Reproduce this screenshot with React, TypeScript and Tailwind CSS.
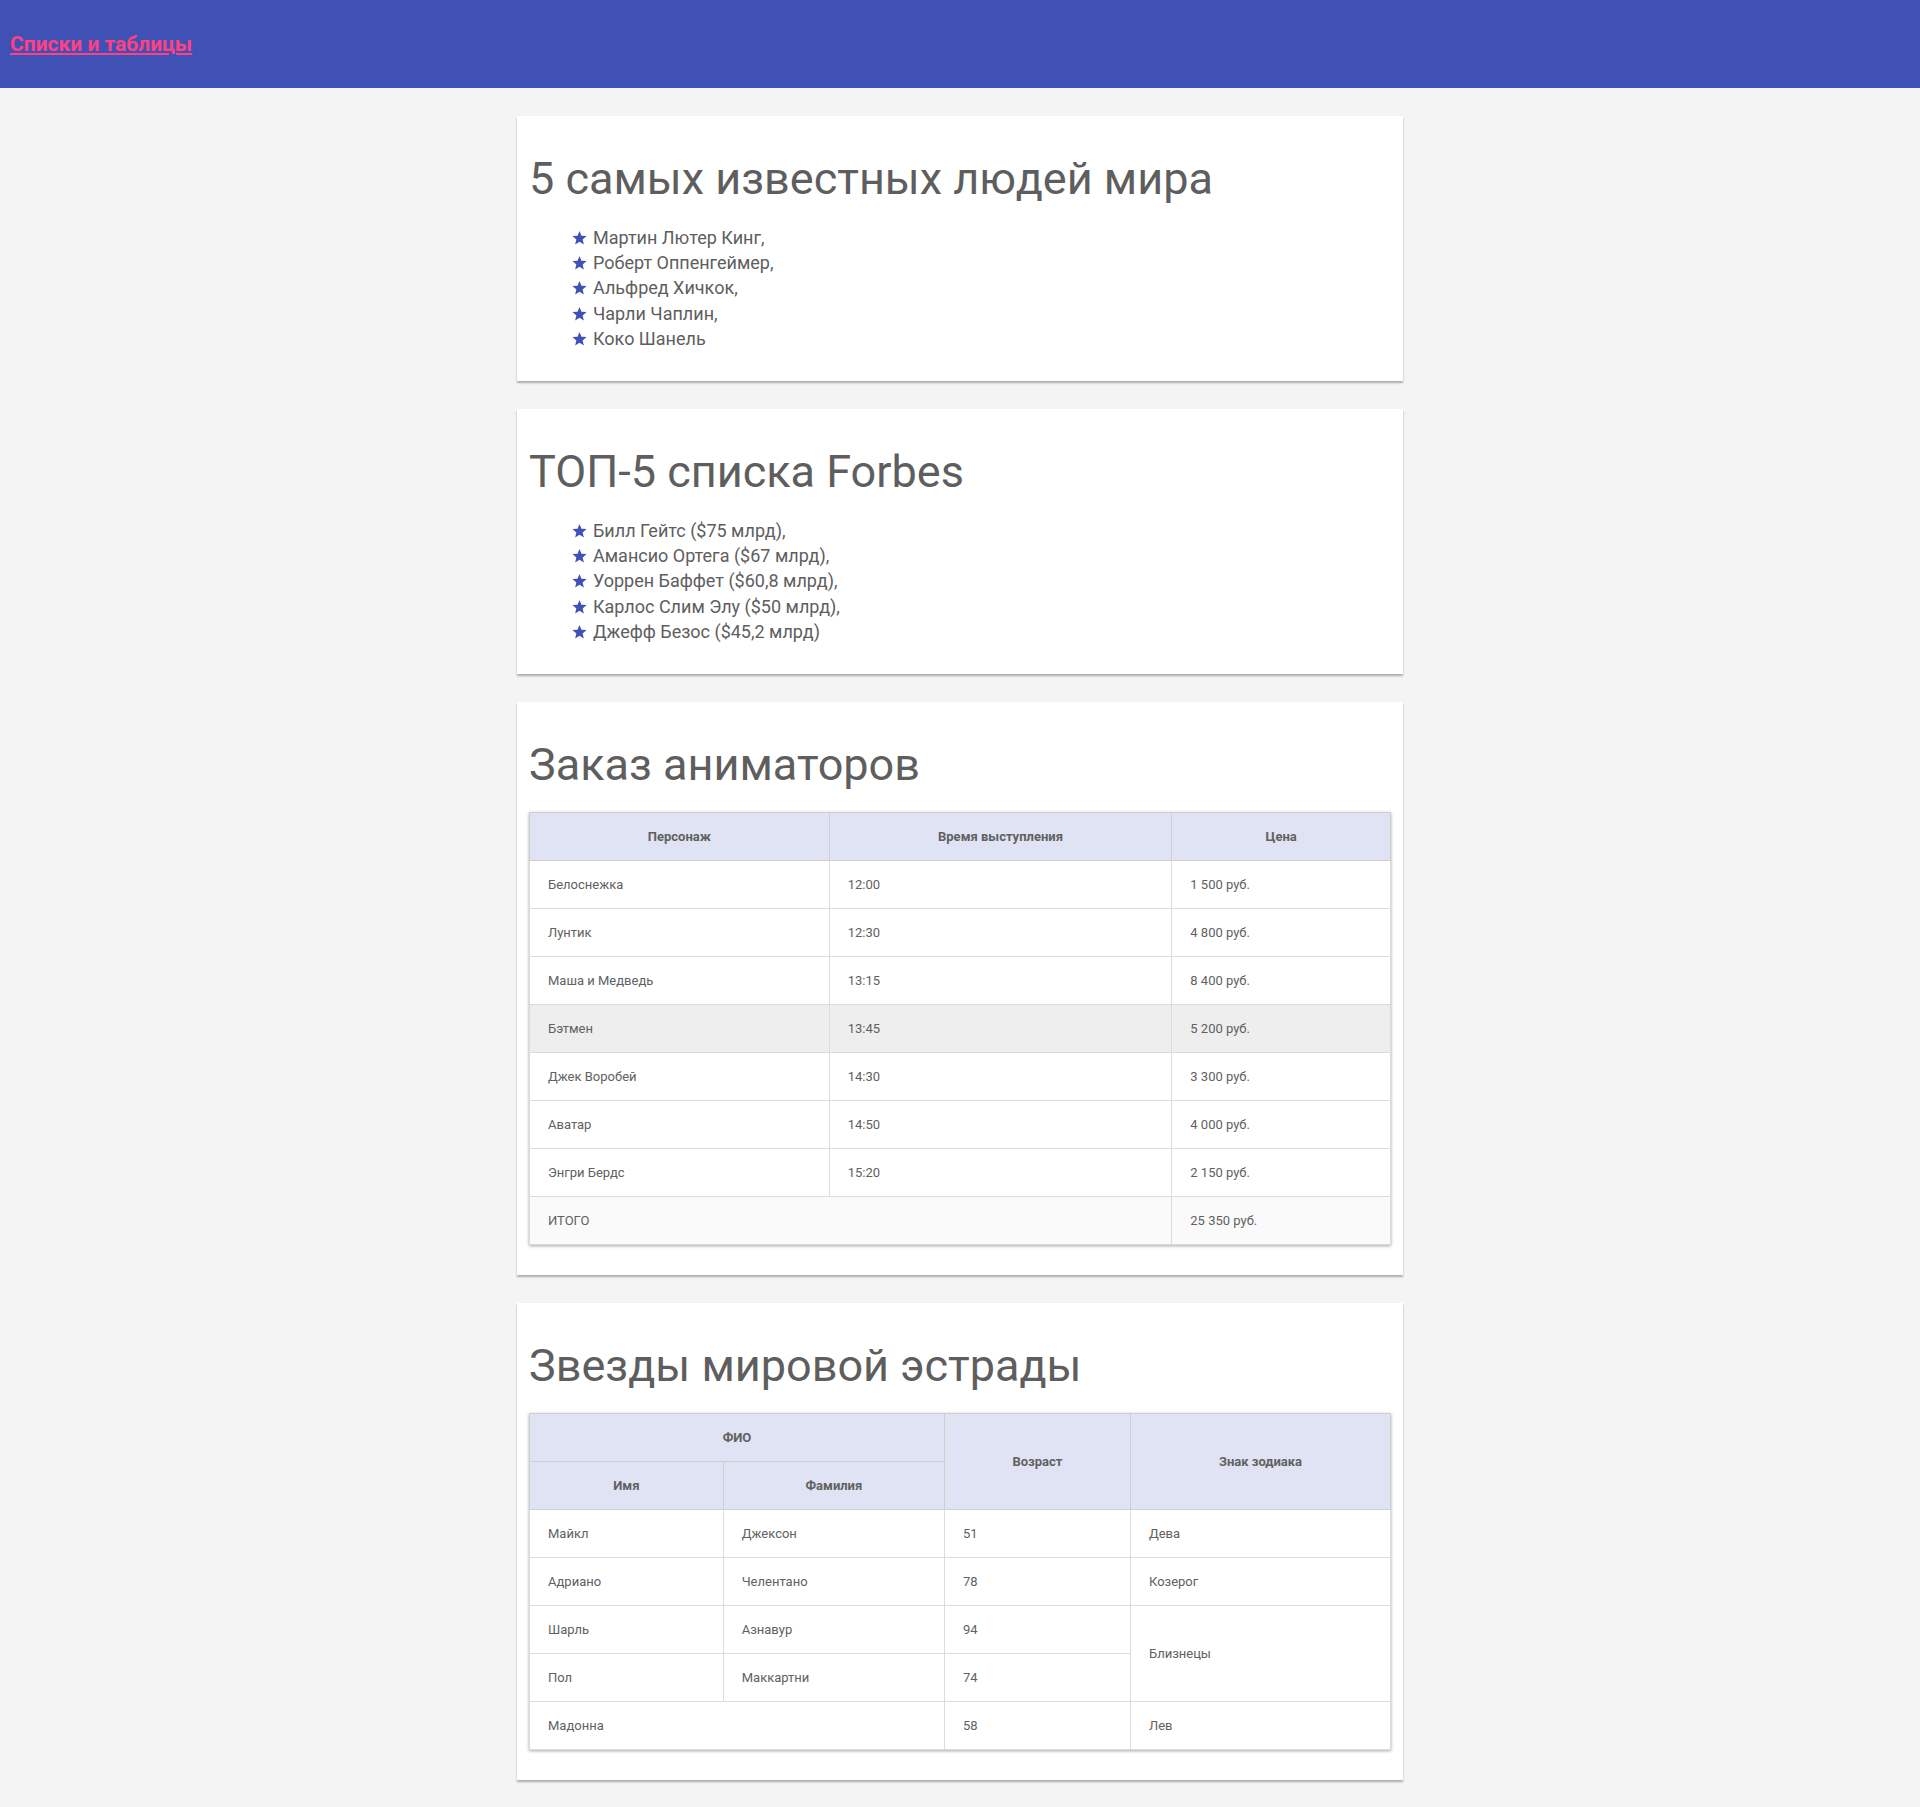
import React from 'react'

const famous = ['Мартин Лютер Кинг,', 'Роберт Оппенгеймер,', 'Альфред Хичкок,', 'Чарли Чаплин,', 'Коко Шанель']
const forbes = ['Билл Гейтс ($75 млрд),', 'Амансио Ортега ($67 млрд),', 'Уоррен Баффет ($60,8 млрд),', 'Карлос Слим Элу ($50 млрд),', 'Джефф Безос ($45,2 млрд)']

const animators = [
  { name: 'Белоснежка', time: '12:00', price: '1 500 руб.' },
  { name: 'Лунтик', time: '12:30', price: '4 800 руб.' },
  { name: 'Маша и Медведь', time: '13:15', price: '8 400 руб.' },
  { name: 'Бэтмен', time: '13:45', price: '5 200 руб.', hover: true },
  { name: 'Джек Воробей', time: '14:30', price: '3 300 руб.' },
  { name: 'Аватар', time: '14:50', price: '4 000 руб.' },
  { name: 'Энгри Бердс', time: '15:20', price: '2 150 руб.' },
]

function Star() {
  return (
    <svg width="15" height="15" viewBox="0 0 24 24" className="shrink-0">
      <path fill="#3f51b5" d="M12 1.5l3.1 7.6 8.2.6-6.3 5.3 2 8L12 18.6 4.99 23l2-8L.7 9.7l8.2-.6z" />
    </svg>
  )
}

function Card({ title, children }: { title: string; children: React.ReactNode }) {
  return (
    <section className="bg-white px-3 pt-[37px] pb-[30px] shadow-[0_2px_2px_rgba(0,0,0,0.3)]">
      <h2 className="text-[45px] leading-[52px] font-normal text-[#5e5e5e]">{title}</h2>
      {children}
    </section>
  )
}

function List({ items }: { items: string[] }) {
  return (
    <ul className="mt-[20px] pl-[43px]">
      {items.map(t => (
        <li key={t} className="flex items-center gap-[6px] h-[25.2px] text-[18px] text-[#5e5e5e]">
          <Star />
          <span>{t}</span>
        </li>
      ))}
    </ul>
  )
}

const th = 'h-[48px] px-[18px] text-center font-bold border border-[#cfcfcf]'
const td = 'h-[48px] px-[18px] border border-[#dcdcdc]'

export default function App() {
  return (
    <div className="min-h-screen bg-[#f4f4f4] font-['Roboto',sans-serif] text-[#616161]">
      <header className="h-[88px] bg-[#3f51b5] flex items-center px-[10px] pt-[2px]">
        <a href="#" className="text-[21px] font-bold text-[#ff4081] underline">Списки и таблицы</a>
      </header>

      <main className="w-[886px] mx-auto py-[28px] flex flex-col gap-[28px]">
        <Card title="5 самых известных людей мира">
          <List items={famous} />
        </Card>

        <Card title="ТОП-5 списка Forbes">
          <List items={forbes} />
        </Card>

        <Card title="Заказ аниматоров">
          <table className="mt-[21px] w-full table-fixed border-collapse text-[13px] shadow-[0_1px_3px_rgba(0,0,0,0.35)]">
            <colgroup>
              <col className="w-[34.8%]" />
              <col className="w-[39.8%]" />
              <col className="w-[25.4%]" />
            </colgroup>
            <thead className="bg-[#e0e3f3]">
              <tr>
                <th className={th}>Персонаж</th>
                <th className={th}>Время выступления</th>
                <th className={th}>Цена</th>
              </tr>
            </thead>
            <tbody>
              {animators.map(a => (
                <tr key={a.name} className={a.hover ? 'bg-[#eeeeee]' : 'bg-white'}>
                  <td className={td}>{a.name}</td>
                  <td className={td}>{a.time}</td>
                  <td className={td}>{a.price}</td>
                </tr>
              ))}
            </tbody>
            <tfoot>
              <tr className="bg-[#fafafa]">
                <td className={td + ' border-t-[#bdbdbd]'} colSpan={2}>ИТОГО</td>
                <td className={td + ' border-t-[#bdbdbd]'}>25 350 руб.</td>
              </tr>
            </tfoot>
          </table>
        </Card>

        <Card title="Звезды мировой эстрады">
          <table className="mt-[21px] w-full table-fixed border-collapse text-[13px] shadow-[0_1px_3px_rgba(0,0,0,0.35)]">
            <colgroup>
              <col className="w-[22.5%]" />
              <col className="w-[25.7%]" />
              <col className="w-[21.6%]" />
              <col className="w-[30.2%]" />
            </colgroup>
            <thead className="bg-[#e0e3f3]">
              <tr>
                <th className={th} colSpan={2}>ФИО</th>
                <th className={th} rowSpan={2}>Возраст</th>
                <th className={th} rowSpan={2}>Знак зодиака</th>
              </tr>
              <tr>
                <th className={th}>Имя</th>
                <th className={th}>Фамилия</th>
              </tr>
            </thead>
            <tbody className="bg-white">
              <tr>
                <td className={td}>Майкл</td>
                <td className={td}>Джексон</td>
                <td className={td}>51</td>
                <td className={td}>Дева</td>
              </tr>
              <tr>
                <td className={td}>Адриано</td>
                <td className={td}>Челентано</td>
                <td className={td}>78</td>
                <td className={td}>Козерог</td>
              </tr>
              <tr>
                <td className={td}>Шарль</td>
                <td className={td}>Азнавур</td>
                <td className={td}>94</td>
                <td className={td} rowSpan={2}>Близнецы</td>
              </tr>
              <tr>
                <td className={td}>Пол</td>
                <td className={td}>Маккартни</td>
                <td className={td}>74</td>
              </tr>
              <tr>
                <td className={td + ' border-t-[#bdbdbd]'} colSpan={2}>Мадонна</td>
                <td className={td + ' border-t-[#bdbdbd]'}>58</td>
                <td className={td}>Лев</td>
              </tr>
            </tbody>
          </table>
        </Card>
      </main>
    </div>
  )
}
